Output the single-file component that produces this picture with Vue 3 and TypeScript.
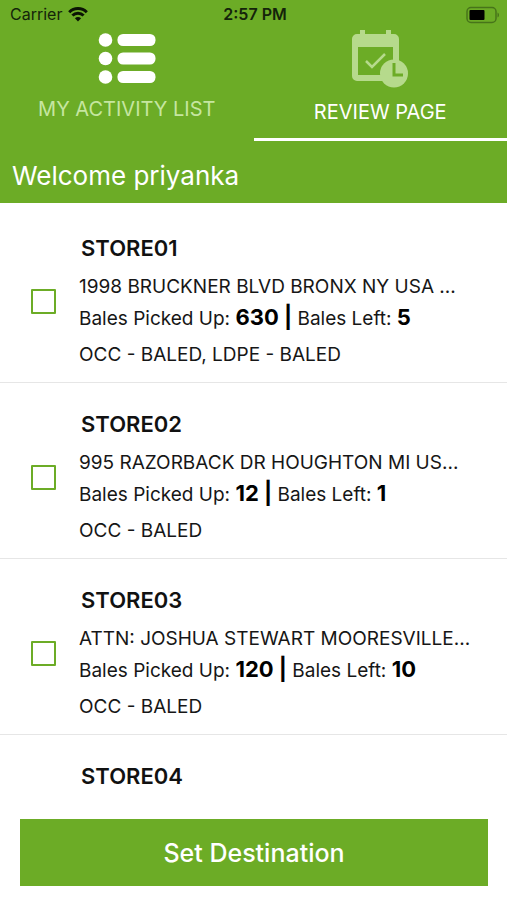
<script setup lang="ts">
import { ref } from 'vue'

interface Store {
  name: string
  address?: string
  picked?: number
  left?: number
  materials?: string
}

const stores: Store[] = [
  { name: 'STORE01', address: '1998 BRUCKNER BLVD BRONX NY USA ...', picked: 630, left: 5, materials: 'OCC - BALED, LDPE - BALED' },
  { name: 'STORE02', address: '995 RAZORBACK DR HOUGHTON MI US...', picked: 12, left: 1, materials: 'OCC - BALED' },
  { name: 'STORE03', address: 'ATTN: JOSHUA STEWART MOORESVILLE...', picked: 120, left: 10, materials: 'OCC - BALED' },
  { name: 'STORE04' },
]

const selected = ref<string[]>([])
const activeTab = ref<'activity' | 'review'>('review')
</script>

<template>
  <div class="screen">
    <header class="header">
      <div class="status">
        <div class="carrier">
          <span>Carrier</span>
          <svg class="wifi" viewBox="0 0 20 15" aria-hidden="true">
            <path d="M1.2 5.2a12.6 12.6 0 0 1 17.6 0" />
            <path d="M4.4 8.5a8 8 0 0 1 11.2 0" />
            <path class="dot" d="M10 14.6 6.9 11.3a4.6 4.6 0 0 1 6.2 0z" />
          </svg>
        </div>
        <span class="time">2:57 PM</span>
        <div class="power">
          <svg class="battery" viewBox="0 0 34 18" aria-hidden="true">
            <rect class="shell" x="1" y="1.6" width="29" height="14.8" rx="4" />
            <rect x="3.5" y="4" width="15" height="10" rx="1" />
            <path class="tip" d="M31.5 6.5c2 .8 2 4.2 0 5z" />
          </svg>
        </div>
      </div>

      <nav class="tabs">
        <button type="button" class="tab" :class="{ active: activeTab === 'activity' }" @click="activeTab = 'activity'">
          <svg class="icon-list" viewBox="0 0 58 52" aria-hidden="true">
            <circle cx="7.5" cy="7" r="6.8" />
            <circle cx="7.5" cy="25.5" r="6.8" />
            <circle cx="7.5" cy="44" r="6.8" />
            <rect x="19.5" y="1" width="38" height="12" rx="5.5" />
            <rect x="19.5" y="19.5" width="38" height="12" rx="5.5" />
            <rect x="19.5" y="38" width="38" height="12" rx="5.5" />
          </svg>
          <span>MY ACTIVITY LIST</span>
        </button>
        <button type="button" class="tab" :class="{ active: activeTab === 'review' }" @click="activeTab = 'review'">
          <svg class="icon-calendar" viewBox="0 0 58 58" aria-hidden="true">
            <path fill-rule="evenodd" d="M9 0h5v4h21V0h5v4h3a5 5 0 0 1 5 5v37a5 5 0 0 1-5 5H6a5 5 0 0 1-5-5V9a5 5 0 0 1 5-5h3zM7 17v28h35V17z" />
            <path class="check" d="m15 31 6 6 13-13" />
            <circle cx="43" cy="43.5" r="14" />
            <path class="hands" d="M43 33v12h9" />
          </svg>
          <span>REVIEW PAGE</span>
        </button>
      </nav>

      <h1 class="welcome">Welcome priyanka</h1>
    </header>

    <main class="list">
      <label v-for="store in stores" :key="store.name" class="store">
        <input v-if="store.address" v-model="selected" type="checkbox" class="box" :value="store.name" />
        <span v-else class="blank"></span>
        <span class="details">
          <span class="name">{{ store.name }}</span>
          <template v-if="store.address">
            <span class="address">{{ store.address }}</span>
            <span class="bales">Bales Picked Up: <b>{{ store.picked }} |</b> Bales Left: <b>{{ store.left }}</b></span>
            <span class="materials">{{ store.materials }}</span>
          </template>
        </span>
      </label>
    </main>

    <footer class="footer">
      <button type="button" class="submit">Set Destination</button>
    </footer>
  </div>
</template>

<style>
body {
  margin: 0;
  background: #fff;
}
</style>

<style scoped>
.screen {
  display: flex;
  flex-direction: column;
  height: 100vh;
  overflow: hidden;
  font-family: Inter, "Liberation Sans", sans-serif;
  color: #161616;
}

.header {
  flex: none;
  background: #6cac26;
  color: #fff;
}

.status {
  display: grid;
  grid-template-columns: 1fr auto 1fr;
  align-items: center;
  height: 29px;
  padding: 0 7px 0 10px;
  font-size: 16px;
  line-height: 29px;
  color: #14240a;
}

.carrier {
  display: flex;
  align-items: center;
  gap: 6px;
}

.wifi {
  width: 20px;
  height: 15px;
  fill: none;
  stroke: #0b1404;
  stroke-width: 3;
}

.wifi .dot {
  fill: #0b1404;
  stroke: none;
}

.time {
  font-weight: 600;
}

.power {
  display: flex;
  justify-content: flex-end;
}

.battery {
  width: 34px;
  height: 18px;
  fill: #000;
}

.battery .shell {
  fill: none;
  stroke: #47741a;
  stroke-width: 1.5;
}

.battery .tip {
  fill: #47741a;
}

.tabs {
  display: grid;
  grid-template-columns: 1fr 1fr;
  height: 112px;
}

.tab {
  display: flex;
  flex-direction: column;
  align-items: center;
  justify-content: center;
  gap: 12px;
  padding: 0 0 14px;
  border: 0;
  border-bottom: 3px solid transparent;
  background: none;
  font: 400 20px/24px Inter, "Liberation Sans", sans-serif;
  color: #c6e6a0;
  cursor: pointer;
}

.tab.active {
  border-bottom-color: #fff;
  color: #fff;
}

.icon-list {
  width: 58px;
  height: 52px;
  fill: #fff;
}

.icon-calendar {
  width: 58px;
  height: 58px;
  fill: #b6da8c;
}

.icon-calendar .check {
  fill: none;
  stroke: #b6da8c;
  stroke-width: 2.5;
}

.icon-calendar .hands {
  fill: none;
  stroke: #6cac26;
  stroke-width: 3;
}

.welcome {
  margin: 0;
  padding: 19px 12px 11px;
  font-size: 26px;
  font-weight: 400;
  line-height: 32px;
}

.list {
  flex: 1;
  min-height: 0;
  padding-top: 4px;
  overflow: hidden;
}

.store {
  display: grid;
  grid-template-columns: 25px 1fr;
  column-gap: 23px;
  min-height: 176px;
  padding: 0 31px;
  border-bottom: 1px solid #e6e6e6;
  box-sizing: border-box;
}

.box {
  appearance: none;
  width: 25px;
  height: 25px;
  margin: 82px 0 0;
  border: 2px solid #6cac26;
  border-radius: 1px;
  background: #fff;
}

.box:checked {
  background: #6cac26;
}

.details {
  display: flex;
  flex-direction: column;
  min-width: 0;
  padding-top: 26px;
  font-size: 19px;
  line-height: 31px;
  white-space: nowrap;
}

.name {
  padding-left: 2px;
  margin-bottom: 7px;
  font-size: 22px;
  font-weight: 600;
  color: #111;
}

.materials {
  margin-top: 5px;
}

.bales b {
  font-size: 22px;
  font-weight: 700;
  color: #000;
}

.footer {
  flex: none;
  padding: 12px 19px 14px 20px;
  background: #fff;
}

.submit {
  display: block;
  width: 100%;
  height: 67px;
  border: 0;
  background: #6cac26;
  font: 500 25px/30px Inter, "Liberation Sans", sans-serif;
  color: #fff;
  cursor: pointer;
}
</style>
